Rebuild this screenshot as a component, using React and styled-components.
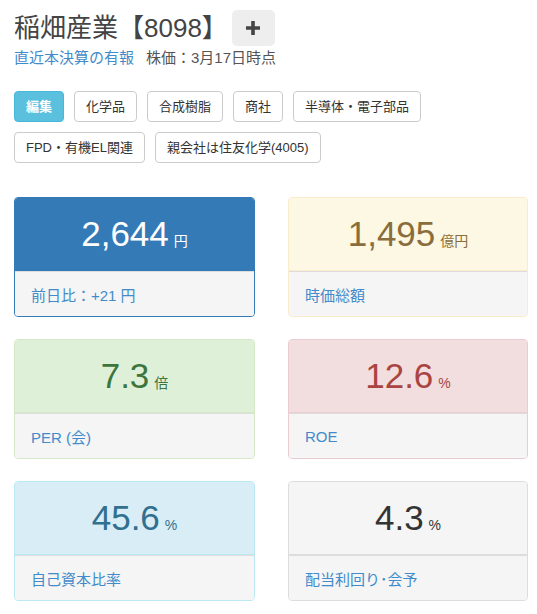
import React from 'react'
import styled, { createGlobalStyle } from 'styled-components'

const GlobalStyle = createGlobalStyle`
    body{
        margin: 0;
        background: #fff;
        font-family: "Liberation Sans", "Noto Sans CJK JP", sans-serif;
        color: #333;
    }
`

const tags = ['化学品', '合成樹脂', '商社', '半導体・電子部品', 'FPD・有機EL関連', '親会社は住友化学(4005)']

// colour sets for the stat panels
const tones = {
    primary: { bg: '#337ab7', border: '#337ab7', color: '#fff' },
    warning: { bg: '#fcf8e3', border: '#faebcc', color: '#8a6d3b' },
    success: { bg: '#dff0d8', border: '#d6e9c6', color: '#3c763d' },
    danger: { bg: '#f2dede', border: '#ebccd1', color: '#a94442' },
    info: { bg: '#d9edf7', border: '#bce8f1', color: '#31708f' },
    plain: { bg: '#f5f5f5', border: '#ddd', color: '#333' },
}

const stats = [
    { tone: 'primary', value: '2,644', unit: '円', label: '前日比：+21 円' },
    { tone: 'warning', value: '1,495', unit: '億円', label: '時価総額' },
    { tone: 'success', value: '7.3', unit: '倍', label: 'PER (会)' },
    { tone: 'danger', value: '12.6', unit: '%', label: 'ROE' },
    { tone: 'info', value: '45.6', unit: '%', label: '自己資本比率' },
    { tone: 'plain', value: '4.3', unit: '%', label: '配当利回り･会予' },
]

const App = () => {
    return (
        <>
            <GlobalStyle />
            <Page>
                <Header>
                    <Title>稲畑産業【8098】</Title>
                    <AddButton>
                        <svg width="14" height="14" viewBox="0 0 14 14">
                            <path d="M7 0v14M0 7h14" stroke="#444" strokeWidth="3.6" />
                        </svg>
                    </AddButton>
                </Header>
                <SubLine>
                    <a href="#">直近本決算の有報</a>
                    <span>株価：3月17日時点</span>
                </SubLine>

                <Tags>
                    <Tag info>編集</Tag>
                    {tags.map(t => <Tag key={t}>{t}</Tag>)}
                </Tags>

                <Grid>
                    {stats.map(s => (
                        <Panel key={s.label} tone={tones[s.tone]}>
                            <div className="heading">
                                <span className="value">{s.value}</span>
                                <span className="unit">{s.unit}</span>
                            </div>
                            <div className="footer">{s.label}</div>
                        </Panel>
                    ))}
                </Grid>
            </Page>
        </>
    )
}

export default App

const Page = styled.div`
    padding: 10px 9px 0 14px;
`

const Header = styled.div`
    display: flex;
    align-items: center;
    gap: 4px;
`

const Title = styled.h1`
    margin: 0;
    font-size: 26px;
    font-weight: 400;
    line-height: 36px;
    color: #444;
`

const AddButton = styled.button`
    width: 43px;
    height: 36px;
    border: none;
    border-radius: 5px;
    background: #eee;
    display: flex;
    align-items: center;
    justify-content: center;
    padding: 0;
`

const SubLine = styled.div`
    margin-top: 1px;
    font-size: 15px;
    line-height: 22px;
    color: #555;
    display: flex;
    gap: 12px;

    a{
        color: #428bca;
        text-decoration: none;
    }
`

const Tags = styled.div`
    margin-top: 22px;
    display: flex;
    flex-wrap: wrap;
    gap: 10px;
    width: 420px;
`

const Tag = styled.button`
    font-family: inherit;
    font-size: 13px;
    line-height: 17px;
    padding: 6px 11px;
    border-radius: 4px;
    border: 1px solid ${props => props.info ? '#46b8da' : '#ccc'};
    background: ${props => props.info ? '#5bc0de' : '#fff'};
    color: ${props => props.info ? '#fff' : '#333'};
    font-weight: ${props => props.info ? 600 : 400};
`

const Grid = styled.div`
    margin-top: 34px;
    display: grid;
    grid-template-columns: 241px 240px;
    column-gap: 33px;
    row-gap: 22px;
`

const Panel = styled.div`
    height: 120px;
    box-sizing: border-box;
    border: 1px solid ${props => props.tone.border};
    border-radius: 4px;
    overflow: hidden;
    display: flex;
    flex-direction: column;

    .heading{
        height: 72px;
        border-bottom: 1px solid ${props => props.tone.border};
        background: ${props => props.tone.bg};
        color: ${props => props.tone.color};
        display: flex;
        align-items: baseline;
        justify-content: center;
        padding-top: 0;
        line-height: 72px;
    }
    .value{
        font-size: 35px;
    }
    .unit{
        font-size: 14px;
        margin-left: 5px;
    }
    .footer{
        flex: 1;
        border-top: 1px solid #ddd;
        background: #f5f5f5;
        color: #428bca;
        font-size: 15px;
        display: flex;
        align-items: center;
        padding: 0 16px;
    }
`
